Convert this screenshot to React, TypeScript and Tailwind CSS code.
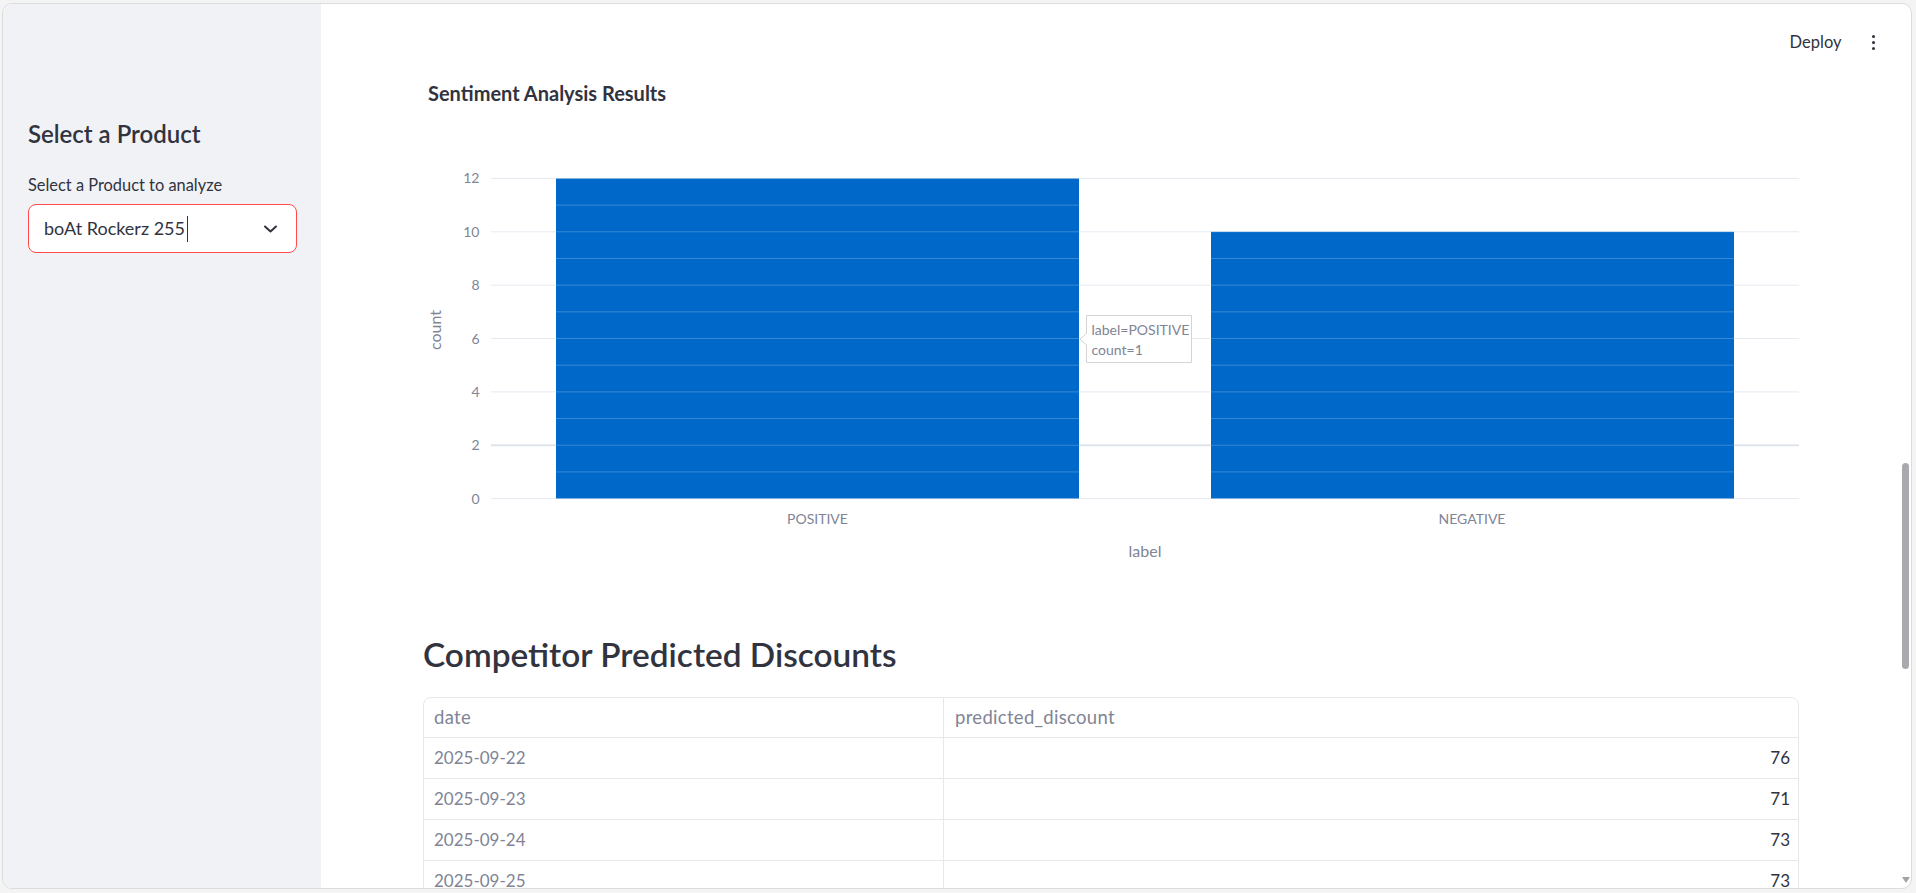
import React from 'react';

const rows = [
  { date: '2025-09-22', discount: 76 },
  { date: '2025-09-23', discount: 71 },
  { date: '2025-09-24', discount: 73 },
  { date: '2025-09-25', discount: 73 },
];

// chart geometry (svg coords)
const X0 = 68;
const X1 = 1376;
const ZERO = 388.6;
const UNIT = 26.68;
const yOf = (v: number) => ZERO - v * UNIT;

const bars = [
  { label: 'POSITIVE', count: 12, x: 133, w: 523, cx: 394.5 },
  { label: 'NEGATIVE', count: 10, x: 788, w: 523, cx: 1049 },
];

function SentimentChart() {
  const ticks = [0, 2, 4, 6, 8, 10, 12];
  return (
    <svg width="1376" height="460" viewBox="0 0 1376 460" className="block">
      {ticks.map((t) => (
        <line
          key={t}
          x1={X0}
          x2={X1}
          y1={yOf(t)}
          y2={yOf(t)}
          stroke={t === 2 ? '#e0e4eb' : '#e6eaf1'}
          strokeWidth={t === 2 ? 2 : 1}
        />
      ))}
      {bars.map((b) => (
        <g key={b.label}>
          <rect x={b.x} y={yOf(b.count)} width={b.w} height={b.count * UNIT} fill="#0068c9" />
          {Array.from({ length: b.count + 1 }).map((_, i) => (
            <line
              key={i}
              x1={b.x}
              x2={b.x + b.w}
              y1={yOf(i)}
              y2={yOf(i)}
              stroke="rgba(255,255,255,0.22)"
              strokeWidth={1}
            />
          ))}
          <text x={b.cx} y={414} textAnchor="middle" fontSize="14" fill="#808495">
            {b.label}
          </text>
        </g>
      ))}
      {ticks.map((t) => (
        <text key={t} x={56.5} y={yOf(t) + 5} textAnchor="end" fontSize="14" fill="#808495">
          {t}
        </text>
      ))}
      <text x={11} y={220} transform="rotate(-90 11 220)" textAnchor="middle" dominantBaseline="central" fontSize="16" fill="#808495">
        count
      </text>
      <text x={722} y={447} textAnchor="middle" fontSize="16" fill="#808495">
        label
      </text>
      {/* hover label */}
      <path d="M663.5 205.5 H768.5 V252.5 H663.5 V235 L657 229.3 L663.5 223.5 Z" fill="#ffffff" stroke="#d4d4d4" />
      <text x={668.5} y={225} fontSize="14" fill="#808495">label=POSITIVE</text>
      <text x={668.5} y={245} fontSize="14" fill="#808495">count=1</text>
    </svg>
  );
}

export default function App() {
  return (
    <div className="h-screen w-full bg-[#f4f4f4] pt-[3px] pl-[2px] font-[Lato,sans-serif] text-[#31333f]">
      <div className="flex h-[886px] w-[1910px] overflow-hidden rounded-[10px] border border-[#dcdcdc] bg-white">
        {/* sidebar */}
        <aside className="w-[318px] shrink-0 bg-[#f0f2f6] pt-[114px] pl-[25px] pr-[24px]">
          <h2 className="text-[24px] font-semibold leading-[32px]">Select a Product</h2>
          <p className="mt-[25px] text-[16.4px] leading-[20px]">Select a Product to analyze</p>
          <div className="mt-[9px] flex h-[49px] items-center justify-between rounded-[8px] border border-[#ff4b4b] bg-white pl-[15px] pr-[19px]">
            <div className="flex items-center">
              <span className="text-[18px]">boAt Rockerz 255</span>
              <span className="ml-[2px] h-[26px] w-px bg-[#31333f]" />
            </div>
            <svg width="13" height="8" viewBox="0 0 13 8">
              <path d="M1 1.5 L6.5 6.5 L12 1.5" fill="none" stroke="#31333f" strokeWidth="2" strokeLinecap="round" strokeLinejoin="round" />
            </svg>
          </div>
        </aside>

        {/* main */}
        <main className="flex min-w-0 flex-1">
          <div className="flex min-w-0 flex-1 flex-col">
            <div className="flex h-[77px] shrink-0 items-center justify-end pr-[25px]">
              <span className="text-[16.5px]">Deploy</span>
              <div className="ml-[30px] flex flex-col items-center gap-[2.5px]">
                <span className="h-[3.5px] w-[3.5px] rounded-full bg-[#31333f]" />
                <span className="h-[3.5px] w-[3.5px] rounded-full bg-[#31333f]" />
                <span className="h-[3.5px] w-[3.5px] rounded-full bg-[#31333f]" />
              </div>
            </div>

            <div className="pl-[102px] pr-[101px]">
              <div className="h-[29px] pl-[5px] text-[20px] font-bold leading-[24px]">Sentiment Analysis Results</div>
              <SentimentChart />

              <h3 className="mt-[64px] text-[33.4px] font-semibold leading-[40px]">Competitor Predicted Discounts</h3>

              <div className="mt-[23px] rounded-t-[8px] border border-[#e8e8ea] text-[17px]">
                <div className="flex h-[40px] border-b border-[#e8e8ea] text-[18.5px] tracking-[0.3px] text-[#808495]">
                  <div className="flex w-[520px] items-center border-r border-[#e8e8ea] pl-[10px]">date</div>
                  <div className="flex flex-1 items-center pl-[11px]">predicted_discount</div>
                </div>
                {rows.map((r) => (
                  <div key={r.date} className="flex h-[41px] border-b border-[#e8e8ea]">
                    <div className="flex w-[520px] items-center border-r border-[#e8e8ea] pl-[10px] text-[#808495]">{r.date}</div>
                    <div className="flex flex-1 items-center justify-end pr-[8px]">{r.discount}</div>
                  </div>
                ))}
              </div>
            </div>
          </div>

          {/* scrollbar */}
          <div className="flex w-[11px] shrink-0 flex-col items-center pt-[459px] pb-[5px]">
            <div className="h-[206px] w-[7px] rounded-full bg-[#a9a9ae]" />
            <div className="flex-1" />
            <div className="h-0 w-0 border-x-[4px] border-t-[6px] border-x-transparent border-t-[#a3a3a3]" />
          </div>
        </main>
      </div>
    </div>
  );
}
